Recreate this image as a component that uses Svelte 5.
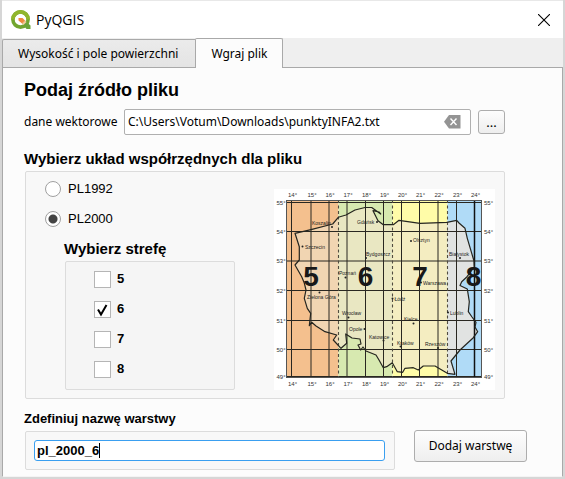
<script>
  let filePath = $state('C:\\Users\\Votum\\Downloads\\punktyINFA2.txt');
  let system = $state('PL2000');
  let zones = $state([
    { name: '5', checked: false },
    { name: '6', checked: true },
    { name: '7', checked: false },
    { name: '8', checked: false }
  ]);
  let layerName = $state('pl_2000_6');

  const meridians = [
    [14, 291.5], [15, 311], [16, 329], [17, 347], [18, 365.5], [19, 383.5],
    [20, 401.5], [21, 419.5], [22, 438], [23, 456.5], [24, 474.5]
  ];
  const parallels = [
    [55, 202.5], [54, 231.5], [53, 261], [52, 290.5], [51, 320.5], [50, 349.5], [49, 376.5]
  ];
  const bands = [
    { x: 286, w: 52.5, fill: '#f4c08e' },
    { x: 338.5, w: 54, fill: '#d7e9b0' },
    { x: 392.5, w: 55, fill: '#fffca8' },
    { x: 447.5, w: 34, fill: '#b0dbf7' }
  ];
  const inner = ['#f1d5b2', '#e9e7c2', '#f4edc1', '#e1e3e2'];
  // name, label x, label y, dot x, dot y
  const cities = [
    ['Koszalin', 312, 224.5, 332, 227],
    ['Szczecin', 305, 248.5, 302.5, 246.5],
    ['Gdańsk', 357, 224, 377, 222],
    ['Bydgoszcz', 366, 255.5, 366, 258],
    ['Poznań', 339, 274.5, 345.5, 277.5],
    ['Olsztyn', 413, 241.5, 411, 241],
    ['Białystok', 449, 255.5, 460, 258],
    ['Warszawa', 423, 285, 421, 282.5],
    ['Zielona Góra', 307, 298.5, 319.5, 292.5],
    ['Wrocław', 342, 315, 348.5, 317.5],
    ['Opole', 349, 331, 364.5, 329],
    ['Katowice', 369, 338.5, 383.5, 340.5],
    ['Łódź', 394.5, 300.5, 392.5, 298.5],
    ['Kielce', 404, 321, 413.5, 323.5],
    ['Lublin', 450, 314.5, 448, 312.5],
    ['Kraków', 397, 344.5, 400.5, 346.5],
    ['Rzeszów', 425, 346, 438, 348]
  ];
  const border =
    'M295 233.3L312 229.3L332.7 224L338.3 217.3L346 215L355 210L365 207.5H371.7L380.7 214L379 212L373 210.7L378 220.7L383.3 224.7H393.3L399 220.3L420 223.3L446.7 222.3L456.7 220.3L459 223L465 228.3L467.3 238.3L474 261L474.3 267L467 276.7L461.7 281.7L460 285.5L467.3 289L469.3 301.7L468.3 311.7L472 317L476 322.3L475 327L477.7 331.7L473.3 337.7L460 350L451 361L455 374.3L447.3 373.3L435 366H423.3L418.3 370L413.3 367.7L405 368.3L402.7 372.3L397.3 371.7L392.3 362.7L386.7 366.7L383.3 367.7L379 360L376 355L366 351L363 347L360.7 350L358 345L361 344L360 339L352 338L345.7 334L346.7 343.3L341 348.3L333.3 340L336.7 335L325 331.7L316 326L311.7 322.3L309.3 325.7L310.7 313.3L307.3 308.3L304.3 298.3L306 290L304.3 283L301.7 276.7L295 265L299.3 260V246.7Z';
</script>

<div class="window">
  <header>
    <svg class="logo" width="20" height="20" viewBox="0 0 20 20" aria-hidden="true">
      <circle cx="9.5" cy="9.500" r="7.600" fill="none" stroke="#72a52f" stroke-width="3.600" />
      <path d="M1.900 9.500A7.600 7.600 0 0 1 17.100 9.500" fill="none" stroke="#91b62c" stroke-width="3.600" />
      <path d="M11 13.500L14 10.500L19.500 15.500V19H15.500Z" fill="#6ba338" />
      <path d="M11 13.500L14 10.500L15.500 12L12.500 15Z" fill="#f5c99b" />
      <path d="M7.500 8H11.500L14 10.500L11 13.500L7.500 10.500Z" fill="#f08a3c" />
    </svg>
    <h1>PyQGIS</h1>
    <button class="close" aria-label="Zamknij">
      <svg width="12" height="12" viewBox="0 0 12 12"><path d="M0 0L12 12M12 0L0 12" stroke="#000" stroke-width="1.1" /></svg>
    </button>
  </header>

  <div class="tabs" role="tablist">
    <button class="tab" role="tab" aria-selected="false">Wysokość i pole powierzchni</button>
    <button class="tab active" role="tab" aria-selected="true">Wgraj plik</button>
  </div>

  <main>
    <div class="upper">
      <h2 class="big">Podaj źródło pliku</h2>
      <div class="file">
        <label for="path">dane wektorowe</label>
        <div class="path">
          <input id="path" type="text" bind:value={filePath} />
          <button class="clear" aria-label="Wyczyść" onclick={() => (filePath = '')}>
            <svg width="17" height="14" viewBox="0 0 17 14">
              <path d="M5 0H16.500V13.500H5L0 6.800Z" fill="#949494" />
              <path d="M6.500 3.500L12.500 10M12.500 3.500L6.500 10" stroke="#fff" stroke-width="1.4" />
            </svg>
          </button>
        </div>
        <button class="push browse">...</button>
      </div>

      <h2 class="medium">Wybierz układ współrzędnych dla pliku</h2>
      <section class="group system">
        <div class="choices">
          <label class="option"><input type="radio" name="system" value="PL1992" bind:group={system} />PL1992</label>
          <label class="option"><input type="radio" name="system" value="PL2000" bind:group={system} />PL2000</label>
          <h2 class="medium zone-title">Wybierz strefę</h2>
          <div class="group zones">
            {#each zones as zone}
              <label class="option"><input type="checkbox" bind:checked={zone.checked} />{zone.name}</label>
            {/each}
          </div>
        </div>
        <svg class="map" width="221" height="201" viewBox="274 189 221 201" role="img" aria-label="Strefy układu PL2000">
          <defs>
            <clipPath id="country"><path d={border} /></clipPath>
          </defs>
          <rect x="274" y="189" width="221" height="201" fill="#fff" />
          {#each bands as b}
            <rect x={b.x} y="200" width={b.w} height="178" fill={b.fill} />
          {/each}
          <g clip-path="url(#country)">
            {#each bands as b, i}
              <rect x={b.x} y="200" width={b.w} height="178" fill={inner[i]} />
            {/each}
          </g>
          <g stroke="#292721" stroke-width="1">
            {#each meridians as [, x]}<path d="M{x} 200V378" />{/each}
            {#each parallels as [, y]}<path d="M286 {y}H481.500" />{/each}
          </g>
          <path d="M474.500 200V378" stroke="#111" stroke-width="1.5" />
          <g stroke="#514c40" stroke-width="1.1" stroke-dasharray="3 2.500">
            <path d="M338.500 200V378M392.500 200V378M447.500 200V378" />
          </g>
          <rect x="286.500" y="200.500" width="195" height="177" fill="none" stroke="#555" />
          <path d={border} fill="none" stroke="#25251f" stroke-width="1.2" stroke-linejoin="round" />
          <g class="degrees">
            {#each meridians as [deg, x]}
              <text x={x + 1} y="197" text-anchor="middle">{deg}°</text>
              <text x={x + 1} y="386" text-anchor="middle">{deg}°</text>
            {/each}
            {#each parallels as [deg, y]}
              <text x="276.500" y={y + 2}>{deg}°</text>
              <text x="484" y={y + 2}>{deg}°</text>
            {/each}
          </g>
          <g class="cities">
            {#each cities as [name, x, y, cx, cy]}
              <text {x} {y}>{name}</text>
              <circle {cx} {cy} r="1" />
            {/each}
          </g>
          <g class="numbers">
            <text x="311" y="286">5</text>
            <text x="365.500" y="286">6</text>
            <text x="420" y="286">7</text>
            <text x="473.500" y="286">8</text>
          </g>
        </svg>
      </section>
    </div>

    <h2 class="layer-title"><label for="layer">Zdefiniuj nazwę warstwy</label></h2>
    <div class="layer">
      <div class="group name">
        <input id="layer" type="text" bind:value={layerName} />
        <span class="caret"></span>
      </div>
      <button class="push add">Dodaj warstwę</button>
    </div>
  </main>
</div>

<style>
  :global(body) { background: #d6d6d6; }
  * { box-sizing: border-box; }
  .window {
    margin: 0 2px 3px;
    border-top: 1px solid #e8e8e8;
    background: #efefef;
    color: #000;
    font: 13px/16px "Noto Sans", sans-serif;
  }
  button, input { font: inherit; color: inherit; margin: 0; }
  button { padding: 0; }
  header {
    display: flex;
    align-items: center;
    height: 37px;
    padding: 0 13px 0 9px;
    background: #fff;
  }
  h1 { flex: 1; margin: 0 0 0 5px; font: 14px/18px "Open Sans", sans-serif; }
  .close { display: flex; border: 0; background: none; }
  .tabs { display: flex; align-items: flex-end; height: 29px; }
  .tab {
    height: 28px;
    padding: 0 17px 0 15px;
    border: 1px solid #a9a9a9;
    border-right: 0;
    border-bottom: 0;
    border-radius: 2px 0 0 0;
    background: linear-gradient(#ebebeb, #e4e4e4);
    font-size: 12px;
  }
  .tab.active {
    position: relative;
    height: 30px;
    margin-bottom: -1px;
    padding: 0 15px;
    border-right: 1px solid #a9a9a9;
    border-radius: 2px 2px 0 0;
    background: #fcfcfc;
  }
  main {
    padding: 11px 35px 6px 21px;
    border: 1px solid #a9a9a9;
    border-bottom-color: #f4f4f4;
    background: #fcfcfc;
  }
  .upper { padding-right: 22px; }
  h2 { margin: 0; font: bold 13px/18px "Liberation Sans", Arial, sans-serif; }
  .medium { font-size: 15px; }
  .big { font-size: 18px; line-height: 22px; }
  .file { display: flex; align-items: center; margin: 8px 0 15px; font-size: 12px; }
  .file label { width: 100px; }
  .path {
    display: flex;
    flex: 1;
    align-items: center;
    height: 26px;
    padding: 0 9px 0 3px;
    border: 1px solid #b0b0b0;
    border-radius: 2px;
    background: #fff;
  }
  .path input { flex: 1; min-width: 0; padding: 0; border: 0; outline: 0; background: none; }
  .clear { display: flex; border: 0; background: none; }
  .push { border: 1px solid #adadad; border-radius: 3px; background: linear-gradient(#fdfdfd, #eeeeee); }
  .browse { width: 27px; height: 24px; margin-left: 7px; font-size: 13px; }
  .group { border: 1px solid #dcdcdc; border-radius: 2px; background: #f8f8f8; }
  .system {
    display: flex;
    justify-content: space-between;
    margin: 3px 0 0 1px;
    padding: 2px 9px 8px 19px;
  }
  .option {
    display: flex;
    align-items: center;
    height: 30px;
    font: 13px/16px "Liberation Sans", Arial, sans-serif;
  }
  .option input { appearance: none; margin: 0 7px 0 0; background: #fff; }
  input[type='radio'] { width: 16px; height: 16px; border: 1px solid #a0a0a0; border-radius: 50%; }
  input[type='radio']:checked { background: radial-gradient(circle, #444 0 4px, #fff 5px); }
  .zone-title { margin: 6px 0 3px 19px; }
  .zones { width: 170px; margin-left: 20px; padding: 2px 0 5px 28px; background: #f5f5f5; }
  .zones .option { font-weight: bold; }
  .zones .option input { margin-right: 6px; }
  input[type='checkbox'] { width: 17px; height: 17px; border: 1px solid #b5b5b5; }
  input[type='checkbox']:checked {
    background: #fff url("data:image/svg+xml,%3Csvg xmlns='http://www.w3.org/2000/svg' viewBox='0 0 15 15'%3E%3Cpath d='M3 7.500l3 5L11.500 3' fill='none' stroke='%23000' stroke-width='2'/%3E%3C/svg%3E");
  }
  .map { margin-top: 15px; flex: none; font-family: "Liberation Sans", Arial, sans-serif; }
  .degrees { font-size: 6px; fill: #333; }
  .cities { font-size: 5px; fill: #222; }
  .numbers { font-size: 28px; font-weight: bold; text-anchor: middle; fill: #181818; }
  .layer-title { margin: 11px 0 2px; }
  .layer { display: flex; align-items: flex-start; }
  .name {
    position: relative;
    flex: 1;
    margin: 1px 19px 0 1px;
    padding: 8px 9px 8px 8px;
  }
  .name input {
    display: block;
    width: 100%;
    height: 21px;
    padding: 0 2px;
    border: 1px solid #3a9ff0;
    border-radius: 3px;
    outline: 0;
    background: #fff;
    font: bold 13px/16px "Liberation Sans", Arial, sans-serif;
  }
  .caret { position: absolute; left: 73px; top: 11px; width: 1px; height: 15px; background: #000; }
  .add { width: 113px; height: 32px; font-size: 12px; }
</style>
